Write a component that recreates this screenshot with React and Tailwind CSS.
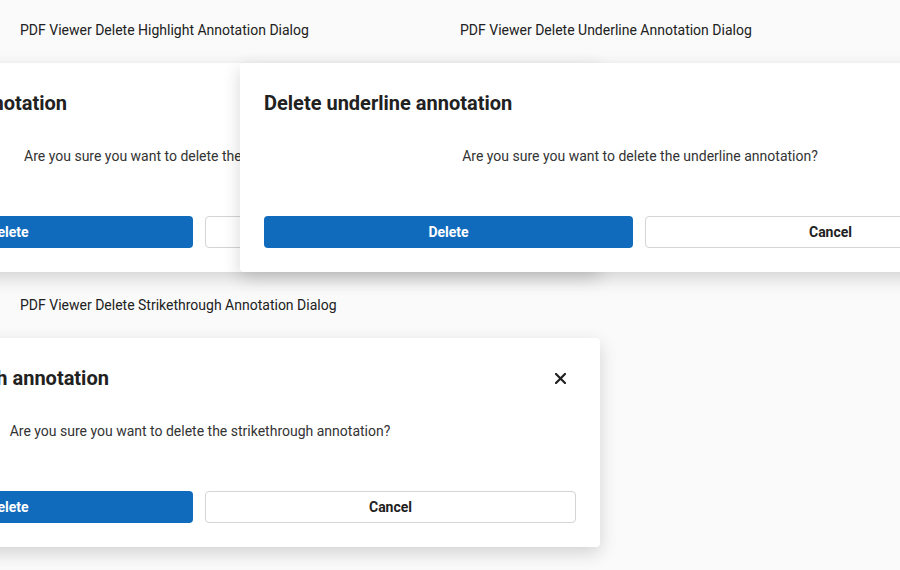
import React from "react";

function DeleteDialog({ kind, showClose = true }) {
  return (
    <div className="w-[800px] ml-[-220px] pt-[25px] bg-white rounded-[4px] shadow-[0_6px_18px_rgba(0,0,0,0.16)]">
      <div className="flex items-center justify-between h-[30px] px-6">
        <h2 className="text-[20px] leading-[30px] font-bold text-[#212121]">
          Delete {kind} annotation
        </h2>
        {showClose && (
          <button type="button" className="w-8 h-[30px] flex items-center justify-center text-[#212121]">
            <svg width="11" height="11" viewBox="0 0 11 11">
              <path d="M1 1L10 10M10 1L1 10" stroke="currentColor" strokeWidth="2.2" strokeLinecap="square" />
            </svg>
          </button>
        )}
      </div>
      <p className="mt-7 text-center text-sm leading-5 text-[#333333]">
        Are you sure you want to delete the {kind} annotation?
      </p>
      <div className="flex gap-3 px-6 pt-[50px] pb-6">
        <button
          type="button"
          className="flex-1 h-8 rounded-[4px] bg-[#106bbd] text-white text-sm font-bold"
        >
          Delete
        </button>
        <button
          type="button"
          className="flex-1 h-8 rounded-[4px] border border-[#d4d4d4] bg-white text-[#212121] text-sm font-bold"
        >
          Cancel
        </button>
      </div>
    </div>
  );
}

function Section({ label, kind }) {
  return (
    <div className="pl-5">
      <div className="text-sm leading-5 text-[#212121] mb-[23px]">{label}</div>
      <DeleteDialog kind={kind} />
    </div>
  );
}

export default function App() {
  return (
    <div
      className="w-[900px] h-[570px] overflow-hidden bg-[#fafafa] pt-5"
      style={{ fontFamily: "Roboto, 'Liberation Sans', sans-serif" }}
    >
      <div className="grid grid-cols-[440px_440px] gap-y-[23px]">
        <Section label="PDF Viewer Delete Highlight Annotation Dialog" kind="highlight" />
        <Section label="PDF Viewer Delete Underline Annotation Dialog" kind="underline" />
        <Section label="PDF Viewer Delete Strikethrough Annotation Dialog" kind="strikethrough" />
      </div>
    </div>
  );
}
